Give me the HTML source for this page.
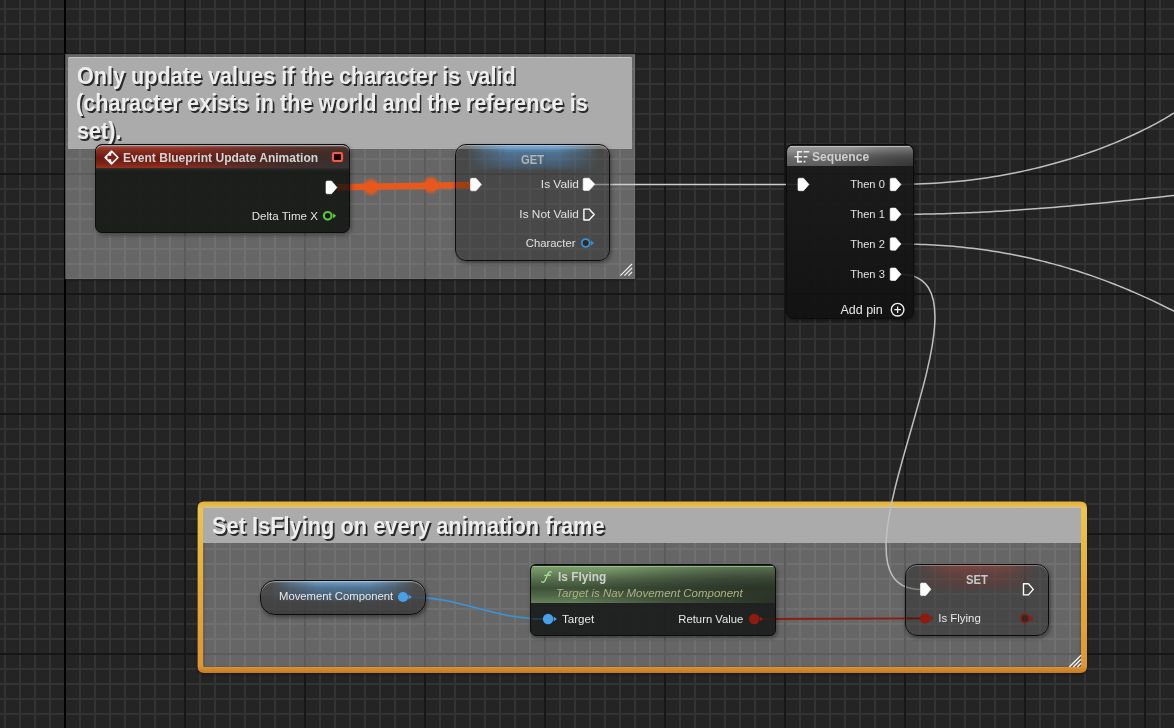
<!DOCTYPE html>
<html><head><meta charset="utf-8"><style>
html,body{margin:0;padding:0;}
body{width:1174px;height:728px;overflow:hidden;position:relative;background:#242424;font-family:'Liberation Sans',sans-serif;}
.abs{position:absolute;}
.t{position:absolute;white-space:nowrap;font-family:'Liberation Sans',sans-serif;}
#grid{position:absolute;left:0;top:0;width:1174px;height:728px;
 background-color:#242424;
 background-image:
  linear-gradient(to right, #161616 0 2px, transparent 2px),
  linear-gradient(to bottom, #161616 0 2px, transparent 2px),
  linear-gradient(to right, #333 0 2px, transparent 2px),
  linear-gradient(to bottom, #333 0 2px, transparent 2px);
 background-size:120px 100%, 100% 120px, 15px 100%, 100% 15px;
 background-position:64px 0, 0 53px, 4px 0, 0 8px;
}
#axis{position:absolute;left:64px;top:0;width:2px;height:728px;background:#000;}
.cbody{position:absolute;background:rgba(255,255,255,0.3);}
.ctitle{position:absolute;background:#ababab;border-radius:2px;}
.ct{color:#eeeeee;font-weight:bold;text-shadow:1.5px 1.5px 0 #2a2a2a;}
.node{position:absolute;box-sizing:border-box;border:1.5px solid #0c0c0c;overflow:hidden;box-shadow:1px 2px 4px rgba(0,0,0,0.42);}
svg{position:absolute;left:0;top:0;}
</style></head><body>
<div id="grid"></div><div id="axis"></div>

<div class="cbody" style="left:65px;top:54px;width:570px;height:224.5px;box-shadow:0 1px 2px rgba(0,0,0,0.5);"></div>
<div class="ctitle" style="left:68px;top:57px;width:564px;height:92px;border-radius:2px 2px 0 0;box-shadow:inset 0 1px 0 #c6c6c6;"></div>
<div class="t" style="left:77.00px;top:65.00px;font-size:23.4px;line-height:23.4px;color:#eeeeee;font-weight:bold;font-style:normal;transform:scaleX(0.9244);transform-origin:0 0;text-shadow:1.8px 1.8px 0.3px #2a2a2a;">Only update values if the character is valid</div>
<div class="t" style="left:76.40px;top:92.00px;font-size:23.4px;line-height:23.4px;color:#eeeeee;font-weight:bold;font-style:normal;transform:scaleX(0.9285);transform-origin:0 0;text-shadow:1.8px 1.8px 0.3px #2a2a2a;">(character exists in the world and the reference is</div>
<div class="t" style="left:77.00px;top:120.00px;font-size:23.4px;line-height:23.4px;color:#eeeeee;font-weight:bold;font-style:normal;transform:scaleX(0.9244);transform-origin:0 0;text-shadow:1.8px 1.8px 0.3px #2a2a2a;">set).</div>
<svg width="1174" height="728" style="pointer-events:none"><g stroke="#f0f0f0" stroke-width="1.2"><line x1="620.4" y1="275.6" x2="632" y2="264"/><line x1="624.4" y1="275.6" x2="632" y2="268"/><line x1="628.4" y1="275.6" x2="632" y2="272"/></g></svg>
<div class="cbody" style="left:203.2px;top:507.3px;width:877.8px;height:159.8px;"></div>
<svg width="1174" height="728" style="filter:drop-shadow(0 1px 1.5px rgba(0,0,0,0.45))"><defs><linearGradient id="og" x1="0" y1="0" x2="0" y2="1"><stop offset="0" stop-color="#e4b03a"/><stop offset="0.04" stop-color="#ebc452"/><stop offset="0.5" stop-color="#e4aa3e"/><stop offset="0.96" stop-color="#dc9636"/><stop offset="1" stop-color="#c87a22"/></linearGradient></defs><path fill-rule="evenodd" fill="url(#og)" d="M204.1,501.6 H1080.5 Q1087,501.6 1087,508.1 V666.4 Q1087,672.9 1080.5,672.9 H204.1 Q197.6,672.9 197.6,666.4 V508.1 Q197.6,501.6 204.1,501.6 Z M204.7,507.3 H1079.5 Q1081,507.3 1081,508.8 V665.6 Q1081,667.1 1079.5,667.1 H204.7 Q203.2,667.1 203.2,665.6 V508.8 Q203.2,507.3 204.7,507.3 Z"/></svg>
<div class="ctitle" style="left:203.2px;top:507.3px;width:877.8px;height:35.5px;border-radius:1px 1px 0 0;box-shadow:inset 0 1px 0 #c2c2c8;"></div>
<div class="t" style="left:212.10px;top:515.00px;font-size:23.4px;line-height:23.4px;color:#eeeeee;font-weight:bold;font-style:normal;transform:scaleX(0.9322);transform-origin:0 0;text-shadow:1.8px 1.8px 0.3px #2a2a2a;">Set IsFlying on every animation frame</div>
<svg width="1174" height="728" style="pointer-events:none"><g stroke="#f4f4f4" stroke-width="1.3"><line x1="1069.3" y1="667" x2="1081" y2="655.3"/><line x1="1073.3" y1="667" x2="1081" y2="659.3"/><line x1="1077.3" y1="667" x2="1081" y2="663.3"/></g></svg>
<svg width="1174" height="728"><defs><filter id="blur1" x="-50%" y="-50%" width="200%" height="200%"><feGaussianBlur stdDeviation="1.6"/></filter></defs>
<path d="M337,187.3 L471,185.0" stroke="#e8581c" stroke-width="6.4" fill="none"/>
<ellipse cx="371" cy="187.0" rx="7.2" ry="7.8" fill="#e8581c" filter="url(#blur1)"/><ellipse cx="431" cy="185.1" rx="7.2" ry="7.8" fill="#e8581c" filter="url(#blur1)"/>
<path d="M595,184.4 L798,184.4" stroke="#cdcdcd" stroke-width="1.5" fill="none"/>
<path d="M897.00,184.40 L903.50,184.37 L909.94,184.27 L916.31,184.10 L922.62,183.87 L928.86,183.58 L935.03,183.23 L941.16,182.82 L947.20,182.35 L953.16,181.83 L959.06,181.26 L964.89,180.63 L970.65,179.96 L976.37,179.23 L981.99,178.46 L987.54,177.65 L993.01,176.79 L998.42,175.90 L1003.75,174.96 L1009.03,173.98 L1014.22,172.98 L1019.33,171.93 L1024.37,170.86 L1029.33,169.75 L1034.22,168.62 L1039.05,167.45 L1043.79,166.27 L1048.45,165.06 L1053.03,163.83 L1057.54,162.58 L1061.96,161.31 L1066.33,160.02 L1070.60,158.72 L1074.79,157.40 L1078.90,156.08 L1082.93,154.74 L1086.88,153.40 L1090.77,152.05 L1094.56,150.69 L1098.26,149.34 L1101.88,147.98 L1105.42,146.63 L1108.88,145.27 L1112.27,143.92 L1115.55,142.58 L1118.76,141.24 L1121.88,139.92 L1124.91,138.60 L1127.85,137.30 L1130.73,136.01 L1133.50,134.74 L1136.18,133.49 L1138.78,132.26 L1141.29,131.05 L1143.71,129.86 L1146.05,128.70 L1148.29,127.56 L1150.44,126.46 L1152.50,125.38 L1154.47,124.34 L1156.34,123.33 L1158.14,122.36 L1159.83,121.42 L1161.43,120.52 L1162.93,119.67 L1164.34,118.86 L1165.66,118.09 L1166.89,117.36 L1168.02,116.69 L1169.05,116.06 L1169.98,115.49 L1170.82,114.97 L1171.56,114.50 L1172.21,114.09 L1172.76,113.74 L1173.20,113.45 L1173.55,113.22 L1173.80,113.05 L1173.95,112.95 L1174.00,112.91" stroke="#c0c0c0" stroke-width="1.5" fill="none" stroke-linejoin="round"/>
<path d="M897.00,214.30 L900.34,214.30 L903.66,214.29 L907.12,214.27 L910.43,214.25 L913.74,214.22 L917.17,214.18 L920.47,214.14 L923.76,214.09 L927.18,214.03 L930.46,213.97 L933.87,213.90 L937.15,213.82 L940.42,213.74 L943.82,213.65 L947.09,213.55 L950.36,213.45 L953.76,213.34 L957.03,213.23 L960.30,213.11 L963.71,212.97 L966.98,212.84 L970.39,212.70 L973.67,212.55 L976.95,212.40 L980.37,212.24 L983.66,212.07 L986.96,211.90 L990.40,211.72 L993.71,211.53 L997.16,211.34 L1000.48,211.14 L1003.81,210.94 L1007.29,210.73 L1010.64,210.51 L1013.99,210.29 L1017.50,210.06 L1020.88,209.83 L1024.26,209.59 L1027.81,209.33 L1031.22,209.09 L1034.79,208.82 L1038.22,208.56 L1041.68,208.29 L1045.29,208.00 L1048.77,207.72 L1052.26,207.44 L1055.92,207.14 L1059.45,206.84 L1063.00,206.54 L1066.71,206.21 L1070.29,205.90 L1074.04,205.56 L1077.66,205.24 L1081.30,204.91 L1085.11,204.55 L1088.79,204.21 L1092.49,203.86 L1096.37,203.49 L1100.12,203.13 L1104.04,202.75 L1107.83,202.38 L1111.65,202.00 L1115.65,201.60 L1119.52,201.21 L1123.41,200.81 L1127.49,200.40 L1131.43,199.99 L1135.40,199.58 L1139.57,199.15 L1143.60,198.72 L1147.82,198.28 L1151.91,197.84 L1156.02,197.40 L1160.34,196.94 L1164.52,196.49 L1168.73,196.04 L1173.14,195.56 L1177.42,195.09 L1181.90,194.60" stroke="#c0c0c0" stroke-width="1.5" fill="none" stroke-linejoin="round"/>
<path d="M897.00,244.00 L901.01,244.01 L905.16,244.05 L909.29,244.11 L913.40,244.19 L917.49,244.31 L921.41,244.44 L925.46,244.59 L929.50,244.78 L933.52,244.98 L937.52,245.22 L941.50,245.47 L945.32,245.74 L949.26,246.05 L953.19,246.37 L957.11,246.72 L961.01,247.10 L964.74,247.48 L968.61,247.91 L972.46,248.35 L976.29,248.82 L980.11,249.31 L983.92,249.83 L987.56,250.35 L991.34,250.91 L995.10,251.50 L998.85,252.11 L1002.58,252.74 L1006.30,253.40 L1009.86,254.05 L1013.55,254.75 L1017.23,255.47 L1020.90,256.22 L1024.55,256.99 L1028.06,257.75 L1031.69,258.56 L1035.30,259.40 L1038.91,260.26 L1042.50,261.14 L1046.09,262.04 L1049.53,262.94 L1053.09,263.88 L1056.64,264.85 L1060.18,265.84 L1063.71,266.86 L1067.23,267.89 L1070.61,268.91 L1074.11,269.99 L1077.60,271.09 L1081.09,272.21 L1084.56,273.35 L1087.90,274.48 L1091.36,275.66 L1094.81,276.87 L1098.25,278.10 L1101.68,279.35 L1105.11,280.62 L1108.40,281.86 L1111.82,283.18 L1115.22,284.51 L1118.62,285.87 L1122.02,287.24 L1125.41,288.64 L1128.66,290.00 L1132.04,291.44 L1135.41,292.90 L1138.78,294.38 L1142.14,295.87 L1145.37,297.34 L1148.73,298.88 L1152.07,300.44 L1155.42,302.02 L1158.76,303.61 L1162.10,305.23 L1165.31,306.81 L1168.64,308.47 L1171.97,310.15 L1175.29,311.85 L1178.62,313.57 L1181.94,315.31" stroke="#c0c0c0" stroke-width="1.5" fill="none" stroke-linejoin="round"/>
<path d="M900.00,274.20 C1012.00,274.20 809.00,589.40 921.00,589.40" stroke="#c0c0c0" stroke-width="1.5" fill="none"/>
<path d="M410.00,597.10 C461.67,597.10 491.83,618.90 543.50,618.90" stroke="#3a94da" stroke-width="1.7" fill="none"/>
<path d="M755,619 L925,618.4" stroke="#8a1c12" stroke-width="1.8" fill="none"/>
</svg>
<div class="node" style="left:95.2px;top:144.2px;width:255px;height:88.4px;border-radius:7px;background:rgba(17,20,16,0.87);"><div style="position:absolute;left:0;top:1px;right:0;height:22px;border-radius:5px 5px 0 0;background:radial-gradient(ellipse 75% 210% at 100% 100%, rgba(52,50,50,0.96) 0%, rgba(50,46,46,0.8) 35%, rgba(50,44,44,0.35) 70%, rgba(50,44,44,0) 100%),linear-gradient(to bottom,#a0463a 0%,#8a2c20 20%,#6a1c14 55%,#7a2418 80%,#9a3020 100%);"></div><div style="position:absolute;left:0;top:0;right:0;height:6px;border-radius:6px 6px 0 0;box-shadow:inset 0 1.2px 0 rgba(185,190,190,0.85);"></div><div style="position:absolute;left:0;top:23px;right:0;height:3px;background:linear-gradient(to bottom,#2c302e,rgba(27,29,28,0));"></div></div>
<div class="t" style="left:122.80px;top:152.00px;font-size:12.5px;line-height:12.5px;color:#d4d4d4;font-weight:bold;font-style:normal;transform:scaleX(0.9643);transform-origin:0 0;">Event Blueprint Update Animation</div>
<div class="t" style="right:856.50px;top:211.00px;font-size:11.5px;line-height:11.5px;color:#e4e4e4;font-weight:normal;font-style:normal;transform:scaleX(1.0038);transform-origin:100% 0;">Delta Time X</div>
<div class="node" style="left:455px;top:144.2px;width:154.7px;height:116.8px;border-radius:11px;border-width:1.3px;background:transparent;"><div style="position:absolute;left:0;top:0;right:0;bottom:0;background:rgb(178,179,177);mix-blend-mode:multiply;"></div><div style="position:absolute;left:0;top:0;right:0;height:26px;background:linear-gradient(to bottom, rgba(125,185,240,0.85) 0%, rgba(85,145,200,0.58) 30%, rgba(70,120,170,0.36) 85%, rgba(70,120,170,0) 100%);-webkit-mask-image:linear-gradient(to right, transparent 6%, rgba(0,0,0,0.5) 18%, #000 34%, #000 66%, rgba(0,0,0,0.5) 82%, transparent 94%);"></div><div style="position:absolute;left:0;top:0;right:0;bottom:0;border-radius:10px;box-shadow:inset 0 1px 0 rgba(230,230,230,0.35);"></div></div>
<div class="t" style="left:520.60px;top:154.00px;font-size:12px;line-height:12px;color:#b4b4b4;font-weight:bold;font-style:normal;transform:scaleX(0.9328);transform-origin:0 0;">GET</div>
<div class="t" style="right:595.30px;top:179.00px;font-size:11.5px;line-height:11.5px;color:#e2e2e2;font-weight:normal;font-style:normal;transform:scaleX(1.0311);transform-origin:100% 0;">Is Valid</div>
<div class="t" style="right:595.30px;top:209.00px;font-size:11.5px;line-height:11.5px;color:#e2e2e2;font-weight:normal;font-style:normal;transform:scaleX(1.0285);transform-origin:100% 0;">Is Not Valid</div>
<div class="t" style="right:598.60px;top:238.00px;font-size:11.5px;line-height:11.5px;color:#e2e2e2;font-weight:normal;font-style:normal;transform:scaleX(0.9843);transform-origin:100% 0;">Character</div>
<div class="node" style="left:786px;top:144.3px;width:127.5px;height:175.2px;border-radius:7px;border-width:1.7px;background:linear-gradient(to bottom, rgba(26,27,26,0.9), rgba(15,16,15,0.9));"><div style="position:absolute;left:0;top:0.3px;right:0;height:20.8px;border-radius:5px 5px 0 0;background:radial-gradient(ellipse 70% 130% at 100% 100%, rgba(45,45,45,0.85) 0%, rgba(45,45,45,0.45) 50%, rgba(45,45,45,0) 100%),linear-gradient(to bottom,#9c9c9c 0%,#8a8a8a 25%,#6a6a6a 60%,#5c5c5c 100%);"></div><div style="position:absolute;left:3px;top:0.3px;right:3px;height:1px;background:rgba(200,200,200,0.8);"></div></div>
<div class="t" style="left:812.40px;top:151.00px;font-size:12.5px;line-height:12.5px;color:#cfcfcf;font-weight:bold;font-style:normal;transform:scaleX(0.9682);transform-origin:0 0;">Sequence</div>
<div class="t" style="right:289.10px;top:179.00px;font-size:11.5px;line-height:11.5px;color:#e2e2e2;font-weight:normal;font-style:normal;transform:scaleX(0.9651);transform-origin:100% 0;">Then 0</div>
<div class="t" style="right:289.10px;top:209.00px;font-size:11.5px;line-height:11.5px;color:#e2e2e2;font-weight:normal;font-style:normal;transform:scaleX(0.9651);transform-origin:100% 0;">Then 1</div>
<div class="t" style="right:289.10px;top:239.00px;font-size:11.5px;line-height:11.5px;color:#e2e2e2;font-weight:normal;font-style:normal;transform:scaleX(0.9651);transform-origin:100% 0;">Then 2</div>
<div class="t" style="right:289.10px;top:269.00px;font-size:11.5px;line-height:11.5px;color:#e2e2e2;font-weight:normal;font-style:normal;transform:scaleX(0.9651);transform-origin:100% 0;">Then 3</div>
<div class="t" style="right:291.60px;top:303.00px;font-size:13.5px;line-height:13.5px;color:#e8e8e8;font-weight:normal;font-style:normal;transform:scaleX(0.9248);transform-origin:100% 0;">Add pin</div>
<div class="node" style="left:260.2px;top:580px;width:166.3px;height:34.6px;border-radius:15px;border-width:1.7px;background:linear-gradient(to bottom, rgba(68,68,68,0.7), rgba(48,48,48,0.72));"><div style="position:absolute;left:0;top:0;right:0;height:21px;background:linear-gradient(to bottom, rgba(120,180,235,0.8) 0%, rgba(85,145,200,0.55) 35%, rgba(70,120,170,0.35) 85%, rgba(70,120,170,0) 100%);-webkit-mask-image:linear-gradient(to right, transparent 6%, rgba(0,0,0,0.5) 18%, #000 34%, #000 66%, rgba(0,0,0,0.5) 82%, transparent 94%);"></div><div style="position:absolute;left:0;top:0;right:0;bottom:0;border-radius:14px;box-shadow:inset 0 1.2px 0 rgba(230,230,230,0.45);"></div></div>
<div class="t" style="left:278.60px;top:591.00px;font-size:11.5px;line-height:11.5px;color:#e8e8e8;font-weight:normal;font-style:normal;transform:scaleX(0.9816);transform-origin:0 0;">Movement Component</div>
<div class="node" style="left:530px;top:564px;width:245.5px;height:71.5px;border-radius:6px;background:rgba(27,29,28,0.93);"><div style="position:absolute;left:0;top:0.5px;right:0;height:37.5px;border-radius:4px 4px 0 0;background:radial-gradient(ellipse 85% 150% at 100% 100%, rgba(36,42,34,0.92) 0%, rgba(36,42,34,0.55) 50%, rgba(36,42,34,0) 100%),linear-gradient(to bottom,#80a072 0%,#6c8a60 18%,#4c6244 45%,#3e5238 60%,#52694a 82%,#66845a 100%);"></div><div style="position:absolute;left:0;top:0.5px;right:0;height:1px;background:rgba(160,205,140,0.75);"></div></div>
<div class="t" style="left:557.90px;top:571.00px;font-size:12.5px;line-height:12.5px;color:#d0d0d0;font-weight:bold;font-style:normal;transform:scaleX(0.9506);transform-origin:0 0;">Is Flying</div>
<div class="t" style="right:431.40px;top:588.00px;font-size:10.75px;line-height:10.75px;color:#acb384;font-weight:normal;font-style:italic;transform:scaleX(1.0683);transform-origin:100% 0;">Target is Nav Movement Component</div>
<div class="t" style="left:562.20px;top:614.00px;font-size:11.5px;line-height:11.5px;color:#e8e8e8;font-weight:normal;font-style:normal;transform:scaleX(1.0084);transform-origin:0 0;">Target</div>
<div class="t" style="right:430.50px;top:614.00px;font-size:11.5px;line-height:11.5px;color:#e8e8e8;font-weight:normal;font-style:normal;transform:scaleX(0.9799);transform-origin:100% 0;">Return Value</div>
<div class="node" style="left:905.3px;top:564.4px;width:143.4px;height:71.4px;border-radius:12px;border-width:1.2px;background:transparent;"><div style="position:absolute;left:0;top:0;right:0;bottom:0;background:rgb(175,176,174);mix-blend-mode:multiply;"></div><div style="position:absolute;left:0;top:0;right:0;height:26px;background:linear-gradient(to bottom, rgba(160,70,65,0.55) 0%, rgba(135,58,54,0.42) 35%, rgba(115,50,46,0.3) 85%, rgba(115,50,46,0) 100%);-webkit-mask-image:linear-gradient(to right, transparent 6%, rgba(0,0,0,0.5) 18%, #000 34%, #000 66%, rgba(0,0,0,0.5) 82%, transparent 94%);"></div><div style="position:absolute;left:0;top:0;right:0;bottom:0;border-radius:11px;box-shadow:inset 0 1px 0 rgba(230,230,230,0.35);"></div></div>
<div class="t" style="left:966.00px;top:574.00px;font-size:12px;line-height:12px;color:#c8c8c8;font-weight:bold;font-style:normal;transform:scaleX(0.9401);transform-origin:0 0;">SET</div>
<div class="t" style="right:193.20px;top:613.00px;font-size:11.5px;line-height:11.5px;color:#e8e8e8;font-weight:normal;font-style:normal;transform:scaleX(0.9940);transform-origin:100% 0;">Is Flying</div>
<svg width="1174" height="728">
<path d="M531.5,618.9 L543,618.9" stroke="rgba(58,148,218,0.22)" stroke-width="1.7"/><path d="M762,619 L774.5,619" stroke="rgba(140,28,18,0.25)" stroke-width="1.8"/>
<path d="M337,187.3 L349.5,187.2" stroke="rgba(150,50,15,0.18)" stroke-width="6.4"/>
<path d="M327.20,181.00 L331.50,181.00 L337.00,187.40 L331.50,193.80 L327.20,193.80 Q326.00,193.80 326.00,192.60 L326.00,182.20 Q326.00,181.00 327.20,181.00 Z" fill="#fff" stroke="#fff" stroke-width="0.6" stroke-linejoin="round"/>
<circle cx="327.70" cy="215.80" r="3.80" fill="#141615" stroke="#5cc43a" stroke-width="2.2"/><path d="M333.00,213.20 L336.20,215.80 L333.00,218.40 Z" fill="#5cc43a"/>
<path d="M471.70,178.30 L476.00,178.30 L481.50,184.55 L476.00,190.80 L471.70,190.80 Q470.50,190.80 470.50,189.60 L470.50,179.50 Q470.50,178.30 471.70,178.30 Z" fill="#fff" stroke="#fff" stroke-width="0.6" stroke-linejoin="round"/>
<path d="M584.40,178.20 L589.05,178.20 L594.90,184.35 L589.05,190.50 L584.40,190.50 Q583.20,190.50 583.20,189.30 L583.20,179.40 Q583.20,178.20 584.40,178.20 Z" fill="#fff" stroke="#fff" stroke-width="0.6" stroke-linejoin="round"/>
<path d="M583.90,209.10 L589.05,209.10 L594.20,214.55 L589.05,220.00 L583.90,220.00 Z" fill="none" stroke="#fff" stroke-width="1.4" stroke-linejoin="round"/>
<circle cx="585.70" cy="243.00" r="3.90" fill="#2a2a2a" stroke="#3d8fd6" stroke-width="1.8"/><path d="M590.90,240.40 L594.10,243.00 L590.90,245.60 Z" fill="#3d8fd6"/>
<path d="M799.20,178.20 L803.50,178.20 L809.00,184.45 L803.50,190.70 L799.20,190.70 Q798.00,190.70 798.00,189.50 L798.00,179.40 Q798.00,178.20 799.20,178.20 Z" fill="#fff" stroke="#fff" stroke-width="0.6" stroke-linejoin="round"/>
<path d="M891.40,178.20 L895.60,178.20 L901.00,184.45 L895.60,190.70 L891.40,190.70 Q890.20,190.70 890.20,189.50 L890.20,179.40 Q890.20,178.20 891.40,178.20 Z" fill="#fff" stroke="#fff" stroke-width="0.6" stroke-linejoin="round"/>
<path d="M891.40,208.10 L895.60,208.10 L901.00,214.35 L895.60,220.60 L891.40,220.60 Q890.20,220.60 890.20,219.40 L890.20,209.30 Q890.20,208.10 891.40,208.10 Z" fill="#fff" stroke="#fff" stroke-width="0.6" stroke-linejoin="round"/>
<path d="M891.40,237.80 L895.60,237.80 L901.00,244.05 L895.60,250.30 L891.40,250.30 Q890.20,250.30 890.20,249.10 L890.20,239.00 Q890.20,237.80 891.40,237.80 Z" fill="#fff" stroke="#fff" stroke-width="0.6" stroke-linejoin="round"/>
<path d="M891.40,268.00 L895.60,268.00 L901.00,274.25 L895.60,280.50 L891.40,280.50 Q890.20,280.50 890.20,279.30 L890.20,269.20 Q890.20,268.00 891.40,268.00 Z" fill="#fff" stroke="#fff" stroke-width="0.6" stroke-linejoin="round"/>
<circle cx="897.6" cy="309.7" r="6.3" fill="none" stroke="#f0f0f0" stroke-width="1.4"/><path d="M894.3,309.7 H900.9 M897.6,306.4 V313" stroke="#f0f0f0" stroke-width="1.3"/>
<circle cx="403.00" cy="597.00" r="5.10" fill="#4aa0e8"/><path d="M408.50,594.40 L411.70,597.00 L408.50,599.60 Z" fill="#4aa0e8"/>
<circle cx="548.10" cy="619.00" r="5.20" fill="#4aa0e8"/><path d="M553.70,616.40 L556.90,619.00 L553.70,621.60 Z" fill="#4aa0e8"/>
<circle cx="754.20" cy="619.00" r="5.30" fill="#8c1c12"/><path d="M759.90,616.40 L763.10,619.00 L759.90,621.60 Z" fill="#8c1c12"/>
<path d="M921.70,583.10 L925.75,583.10 L931.00,589.35 L925.75,595.60 L921.70,595.60 Q920.50,595.60 920.50,594.40 L920.50,584.30 Q920.50,583.10 921.70,583.10 Z" fill="#fff" stroke="#fff" stroke-width="0.6" stroke-linejoin="round"/>
<path d="M1023.50,583.80 L1028.40,583.80 L1033.30,589.35 L1028.40,594.90 L1023.50,594.90 Z" fill="none" stroke="#fff" stroke-width="1.4" stroke-linejoin="round"/>
<circle cx="925.00" cy="618.40" r="5.20" fill="#8c1c12"/><path d="M930.60,615.80 L933.80,618.40 L930.60,621.00 Z" fill="#8c1c12"/>
<circle cx="1025.00" cy="618.40" r="4.10" fill="#2a2a2a" stroke="#8c1c12" stroke-width="1.8"/><path d="M1030.40,615.80 L1033.60,618.40 L1030.40,621.00 Z" fill="#8c1c12"/>
<g transform="translate(111.5,157.5)"><path d="M0,-6.4 L6.4,0 L0,6.4 L-6.4,0 Z" fill="none" stroke="#f2f2f2" stroke-width="1.7" stroke-linejoin="round"/><path d="M-6.4,0 L0,-6.4 L0.5,-5.9 L0.5,5.9 L0,6.4 Z" fill="#f2f2f2"/><path d="M-4,-1.7 H-0.3 V-4.6 L4.2,0 L-0.3,4.6 V1.7 H-4 Z" fill="#7a2218"/></g>
<rect x="333" y="153" width="9" height="8" rx="1.2" fill="#160404" stroke="#f05a46" stroke-width="2.2"/>
<g stroke="#ececec" stroke-width="1.6" fill="none" stroke-linecap="butt"><path d="M797.8,151.0 V162.4"/><path d="M797,151.8 H802 M803.6,151.8 H809.2"/><path d="M794.4,156.8 H802 M803.6,156.8 H807.4"/><path d="M797,161.6 H802 M803.6,161.6 H805.4"/></g>
<g stroke="#a6de94" stroke-width="1.3" fill="none" stroke-linecap="round"><path d="M541.6,581.6 Q543.2,583.6 545,580.6 L548.1,573.6 Q549.4,570.9 551.3,572.1"/><path d="M544.8,575.4 L550.4,575.0"/></g>
</svg>
</body></html>
